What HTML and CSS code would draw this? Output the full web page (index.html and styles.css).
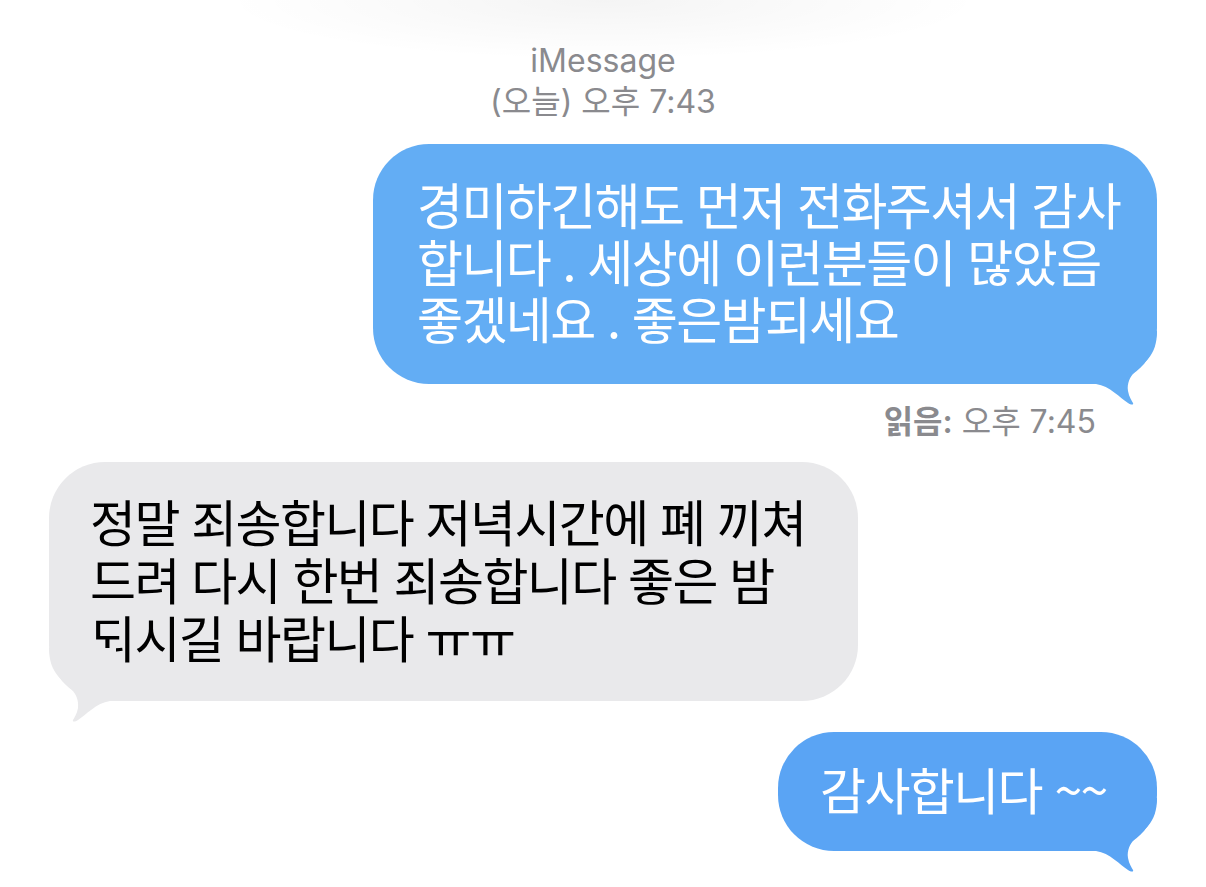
FILE: index.html
```html
<!DOCTYPE html>
<html lang="ko">
<head>
    <meta charset="UTF-8">
    <meta name="viewport" content="width=device-width, initial-scale=1.0">
    <title>iMessage</title>
    <link rel="stylesheet" href="styles.css">
</head>
<body>
    <div class="thread">
        <div class="thread-header">
            <div class="service">iMessage</div>
            <div class="stamp">(오늘) 오후 7:43</div>
        </div>

        <div class="bubble sent bubble-long">
            경미하긴해도 먼저 전화주셔서 감사<br>
            합니다 . 세상에 이런분들이 많았음<br>
            좋겠네요 . 좋은밤되세요
            <svg class="tail" viewBox="0 0 70 75" width="70" height="75">
                <path d="M0,0 H67 C67,12 64,21 58,28 C50,37 36,44 38,60 C39,66 42,70 43,72 C44,74 41,74 38,72 C30,67 20,55 6,53 H0 Z"/>
            </svg>
        </div>
        <div class="receipt"><b>읽음:</b> 오후 7:45</div>

        <div class="bubble received">
            정말 죄송합니다 저녁시간에 폐 끼쳐<br>
            드려 다시 한번 죄송합니다 좋은 밤<br>
            되시길 바랍니다 ㅠㅠ
            <svg class="tail" viewBox="0 0 70 75" width="70" height="75">
                <path d="M0,0 H67 C67,12 64,21 58,28 C50,37 36,44 38,60 C39,66 42,70 43,72 C44,74 41,74 38,72 C30,67 20,55 6,53 H0 Z"/>
            </svg>
        </div>

        <div class="bubble sent bubble-short">
            감사합니다 ~~
            <svg class="tail" viewBox="0 0 70 75" width="70" height="75">
                <path d="M0,0 H67 C67,12 64,21 58,28 C50,37 36,44 38,60 C39,66 42,70 43,72 C44,74 41,74 38,72 C30,67 20,55 6,53 H0 Z"/>
            </svg>
        </div>
    </div>
</body>
</html>
```

FILE: styles.css
```css
body {
    margin: 0;
    background: #fff radial-gradient(ellipse 380px 60px at 50% 0, rgba(0, 0, 0, 0.045), rgba(0, 0, 0, 0));
    background-repeat: no-repeat;
    font-family: "Noto Sans CJK KR", sans-serif;
    height: 887px;
    overflow: hidden;
}
.thread {
    display: flex;
    flex-direction: column;
    padding: 40px 49px 0;
}
.thread-header {
    text-align: center;
    color: #8a8a8e;
    font-family: "Inter", "Noto Sans CJK KR", sans-serif;
    font-size: 32px;
    line-height: 41px;
    margin-bottom: 22px;
}
.bubble {
    position: relative;
    box-sizing: border-box;
    font-size: 50px;
    line-height: 57px;
    letter-spacing: -1.6px;
    border-radius: 56px;
    white-space: nowrap;
}
.bubble .tail {
    position: absolute;
    right: -3px;
    bottom: -22px;
}
.sent {
    align-self: flex-end;
    color: #fff;
    background: #63adf4;
}
.sent .tail path {
    fill: #63adf4;
}
.bubble-long {
    width: 784px;
    padding: 31px 44px 38px;
}
.bubble-short {
    width: 379px;
    padding: 28px 42px 34px;
    margin-top: 31px;
    background: #5aa4f4;
}
.bubble-short .tail path {
    fill: #5aa4f4;
}
.received {
    align-self: flex-start;
    width: 809px;
    padding: 29px 41px 36px;
    line-height: 58px;
    color: #000;
    background: #e9e9eb;
}
.received .tail {
    right: auto;
    left: -3px;
    transform: scaleX(-1);
}
.received .tail path {
    fill: #e9e9eb;
}
.receipt {
    align-self: flex-end;
    margin: 21px 61px 23px 0;
    color: #8a8a8e;
    font-family: "Inter", "Noto Sans CJK KR", sans-serif;
    font-size: 32px;
    line-height: 34px;
}
.receipt b {
    font-weight: 600;
}
```
